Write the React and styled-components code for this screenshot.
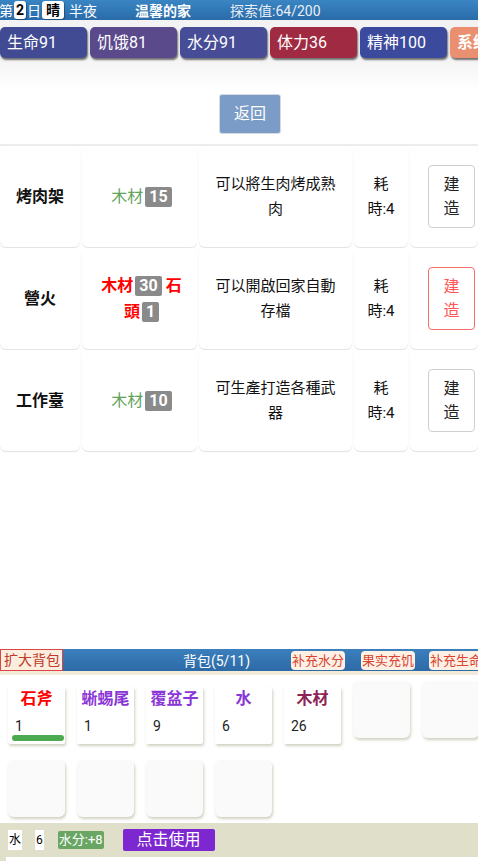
import React from 'react'
import styled, { createGlobalStyle } from 'styled-components'

const GlobalStyle = createGlobalStyle`
  html, body {
    margin: 0;
    padding: 0;
    background: #fff;
    font-family: Roboto, "Noto Sans CJK SC", sans-serif;
    overflow: hidden;
  }
`

const stats = [
  { label: '生命91', color: '#414b94' },
  { label: '饥饿81', color: '#5a4a8c' },
  { label: '水分91', color: '#464d96' },
  { label: '体力36', color: '#a02a42' },
  { label: '精神100', color: '#3b4a9c' },
  { label: '系统', color: '#ea9071', bold: true },
]

const buildings = [
  { name: '烤肉架', mats: [{ name: '木材', n: 15 }], ok: true, desc: '可以將生肉烤成熟肉' },
  { name: '營火', mats: [{ name: '木材', n: 30 }, { name: '石頭', n: 1 }], ok: false, desc: '可以開啟回家自動存檔' },
  { name: '工作臺', mats: [{ name: '木材', n: 10 }], ok: true, desc: '可生產打造各種武器' },
]

const items = [
  { name: '石斧', n: 1, color: '#f00', bar: true },
  { name: '蜥蜴尾', n: 1, color: '#8a35d6' },
  { name: '覆盆子', n: 9, color: '#8a35d6' },
  { name: '水', n: 6, color: '#8a35d6' },
  { name: '木材', n: 26, color: '#8e2356' },
]

export default function App() {
  return (
    <Page>
      <GlobalStyle />
      <TopBar>
        <Day>第<Tag>2</Tag>日<Tag>晴</Tag>半夜</Day>
        <Place>温馨的家</Place>
        <Explore>探索值:64/200</Explore>
      </TopBar>

      <StatRow>
        {stats.map(s => (
          <StatButton key={s.label} $color={s.color} $bold={s.bold}>{s.label}</StatButton>
        ))}
      </StatRow>

      <BackWrap>
        <BackButton>返回</BackButton>
      </BackWrap>

      <Table>
        {buildings.map(b => (
          <Row key={b.name}>
            <NameCell>{b.name}</NameCell>
            <MatCell $ok={b.ok}>
              <span>
                {b.mats.map((m, i) => (
                  <React.Fragment key={m.name}>
                    {i > 0 && ' '}{m.name}<Count>{m.n}</Count>
                  </React.Fragment>
                ))}
              </span>
            </MatCell>
            <DescCell>{b.desc}</DescCell>
            <TimeCell>耗<br />時:4</TimeCell>
            <BuildCell>
              <BuildButton $ok={b.ok}>建<br />造</BuildButton>
            </BuildCell>
          </Row>
        ))}
      </Table>

      <Spacer />

      <BagBar>
        <ExpandButton>扩大背包</ExpandButton>
        <BagTitle>背包(5/11)</BagTitle>
        <QuickButton>补充水分</QuickButton>
        <QuickButton>果实充饥</QuickButton>
        <QuickButton>补充生命</QuickButton>
      </BagBar>
      <BagLine />

      <Grid>
        {items.map(it => (
          <Slot key={it.name} $filled>
            <ItemName $color={it.color}>{it.name}</ItemName>
            <ItemCount>{it.n}</ItemCount>
            {it.bar && <Durability />}
          </Slot>
        ))}
        {Array.from({ length: 6 }).map((_, i) => <Slot key={i} />)}
      </Grid>

      <Footer>
        <Chip>水</Chip>
        <Chip>6</Chip>
        <Effect>水分:+8</Effect>
        <UseButton>点击使用</UseButton>
      </Footer>
      <FooterPanel />
    </Page>
  )
}

const Page = styled.div`
  width: 478px;
  height: 861px;
  display: flex;
  flex-direction: column;
  background: linear-gradient(#f2f2f2 0px, #f4f4f4 60px, #fff 90px);
  overflow: hidden;
`

const TopBar = styled.div`
  height: 20px;
  display: flex;
  align-items: center;
  background: linear-gradient(#3a85c3, #2a6ba9);
  color: #fff;
  font-size: 14px;
  white-space: nowrap;
`

const Day = styled.div`
  display: flex;
  align-items: center;
  width: 136px;
  margin-left: -1px;
`

const Tag = styled.span`
  background: #fff;
  color: #000;
  font-weight: bold;
  border-radius: 3px;
  padding: 0 2px;
  margin: 0 1px;
  line-height: 18px;
  box-shadow: 1px 1px 1px rgba(0, 0, 0, 0.3);
  & + & {
    padding: 0 4px;
    margin-right: 5px;
  }
`

const Place = styled.div`
  width: 95px;
  font-weight: bold;
`

const Explore = styled.div`
  color: #e8eef6;
`

const StatRow = styled.div`
  display: flex;
  gap: 3px;
  padding: 7px 0 0 0;
  height: 32px;
  white-space: nowrap;
`

const StatButton = styled.div`
  flex: 0 0 ${p => (p.$bold ? '40px' : '87px')};
  box-sizing: border-box;
  height: 31px;
  background: ${p => p.$color};
  color: #fff;
  font-size: 16px;
  font-weight: ${p => (p.$bold ? 'bold' : 'normal')};
  line-height: 31px;
  padding-left: 7px;
  border-radius: 5px;
  box-shadow: 1px 2px 2px rgba(0, 0, 0, 0.55);
  overflow: hidden;
`

const BackWrap = styled.div`
  display: flex;
  justify-content: center;
  padding: 35px 0 0 22px;
`

const BackButton = styled.div`
  width: 60px;
  height: 38px;
  background: #7a9cc7;
  border: 1px solid #d6dbe2;
  border-radius: 3px;
  color: #fff;
  font-size: 16px;
  line-height: 38px;
  text-align: center;
`

const Table = styled.div`
  margin-top: 10px;
  display: flex;
  flex-direction: column;
  gap: 1px;
  border-top: 2px solid #ededed;
`

const Row = styled.div`
  display: grid;
  grid-template-columns: 80px 115px 153px 54px 1fr;
  gap: 2px;
  height: 101px;
`

const Cell = styled.div`
  display: flex;
  align-items: center;
  justify-content: center;
  text-align: center;
  background: #fff;
  border-radius: 6px;
  box-shadow: 0 1px 1px rgba(0, 0, 0, 0.12);
  font-size: 15px;
  color: #111;
  line-height: 25px;
`

const NameCell = styled(Cell)`
  font-weight: bold;
  font-size: 16px;
`

const MatCell = styled(Cell)`
  color: ${p => (p.$ok ? '#62a35a' : '#f00')};
  font-size: 16px;
  line-height: 26px;
  font-weight: ${p => (p.$ok ? 'normal' : 'bold')};
  padding: 0 14px 0 18px;
`

const Count = styled.span`
  display: inline-block;
  vertical-align: top;
  margin-top: 3px;
  background: #8a8a8a;
  color: #fff;
  font-weight: bold;
  font-size: 16px;
  line-height: 20px;
  padding: 0 4px;
  border-radius: 2px;
  margin-left: 2px;
`

const DescCell = styled(Cell)`
  padding: 0 10px;
`

const TimeCell = styled(Cell)``

const BuildCell = styled(Cell)`
  justify-content: flex-start;
  padding-left: 18px;
`

const BuildButton = styled.div`
  width: 47px;
  height: 63px;
  box-sizing: border-box;
  border: 1px solid ${p => (p.$ok ? '#cfcfcf' : '#f56c6c')};
  border-radius: 4px;
  color: ${p => (p.$ok ? '#222' : '#f55')};
  display: flex;
  align-items: center;
  justify-content: center;
  font-size: 16px;
  line-height: 24px;
`

const Spacer = styled.div`
  flex: 1;
`

const BagBar = styled.div`
  height: 22px;
  display: flex;
  align-items: center;
  background: linear-gradient(#3b7fbd, #2c6aa6);
  white-space: nowrap;
  flex-shrink: 0;
  overflow: hidden;
`

const ExpandButton = styled.div`
  flex-shrink: 0;
  box-sizing: border-box;
  width: 63px;
  height: 22px;
  background: #fbeede;
  border: 1px solid #d44;
  color: #c0392b;
  font-size: 14px;
  line-height: 20px;
  padding-left: 3px;
`

const BagTitle = styled.div`
  flex: 0 0 228px;
  box-sizing: border-box;
  color: #fff;
  font-size: 14px;
  text-align: right;
  padding-right: 41px;
`

const QuickButton = styled.div`
  flex-shrink: 0;
  background: #fdf1e6;
  color: #d9432f;
  font-size: 13px;
  line-height: 19px;
  border-radius: 4px;
  margin-right: 16px;
  padding: 0 1px;
  &:last-child { margin-right: 0; margin-left: -2px; }
`

const BagLine = styled.div`
  height: 4px;
  background: #f3ebd9;
  flex-shrink: 0;
`

const Grid = styled.div`
  display: flex;
  flex-wrap: wrap;
  column-gap: 12px;
  row-gap: 16px;
  padding: 6px 0 6px 8px;
  width: 500px;
  flex-shrink: 0;
`

const Slot = styled.div`
  position: relative;
  box-sizing: border-box;
  width: 57px;
  height: 57px;
  margin-top: ${p => (p.$filled ? '6px' : '0')};
  margin-bottom: ${p => (p.$filled ? '-6px' : '0')};
  background: ${p => (p.$filled ? '#fff' : '#fafafa')};
  border-radius: ${p => (p.$filled ? '2px' : '6px')};
  box-shadow: 1px 2px 3px rgba(150, 150, 120, 0.45);
  &:nth-child(n + 8) { margin-top: 6px; }
`

const ItemName = styled.div`
  color: ${p => p.$color};
  font-weight: bold;
  font-size: 16px;
  text-align: center;
  line-height: 20px;
  padding-top: 2px;
  white-space: nowrap;
`

const ItemCount = styled.div`
  font-size: 14px;
  color: #222;
  padding-left: 7px;
  line-height: 16px;
  margin-top: 9px;
`

const Durability = styled.div`
  position: absolute;
  left: 4px;
  right: 1px;
  bottom: 3px;
  height: 6px;
  background: #4caa50;
  border-radius: 3px;
`

const Footer = styled.div`
  height: 34px;
  background: #dfdfca;
  display: flex;
  align-items: center;
  padding: 0 0 0 8px;
  flex-shrink: 0;
`

const Chip = styled.span`
  background: #fff;
  font-size: 12px;
  line-height: 20px;
  padding: 0 1px;
  margin-right: 13px;
`

const Effect = styled.span`
  background: #69a563;
  color: #fff;
  font-size: 13px;
  line-height: 18px;
  padding: 0 1px;
  border-radius: 2px;
  margin-left: 1px;
  margin-right: 19px;
`

const UseButton = styled.div`
  width: 92px;
  height: 22px;
  background: #7d27d0;
  color: #fff;
  font-size: 16px;
  line-height: 22px;
  text-align: center;
  border-radius: 2px;
`

const FooterPanel = styled.div`
  height: 4px;
  background: #dfdfca;
  padding: 0 0 0 6px;
  flex-shrink: 0;
  &::after {
    content: '';
    display: block;
    height: 4px;
    background: #fff;
  }
`
